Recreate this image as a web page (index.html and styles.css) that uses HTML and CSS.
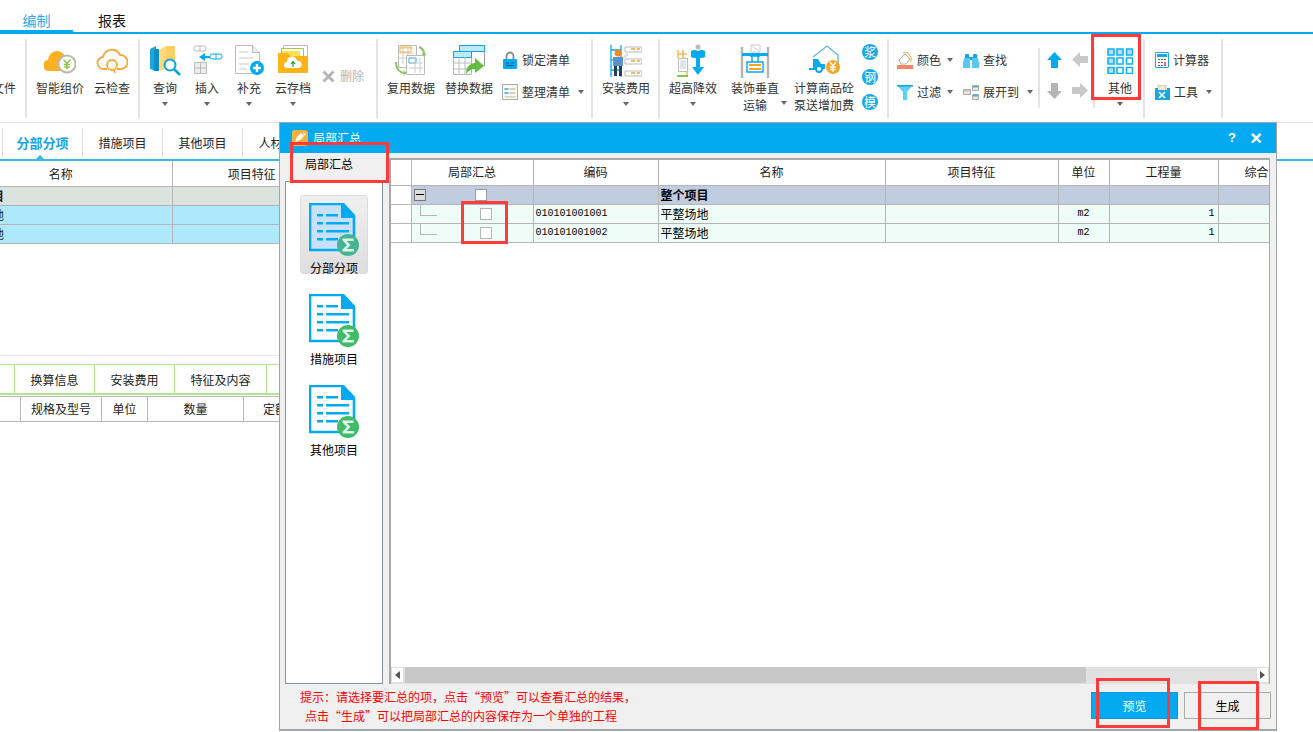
FILE: index.html
```html
<!DOCTYPE html>
<html lang="zh-CN">
<head>
<meta charset="utf-8">
<title>局部汇总</title>
<link rel="stylesheet" href="styles.css">
</head>
<body>
<svg class="defs" width="0" height="0">
  <symbol id="doc" viewBox="0 0 50 53">
    <path d="M1 1H33L45 13V47H1Z" fill="var(--docfill,#fff)" stroke="#03a9f1" stroke-width="2.6"/>
    <path d="M32 0H35L46 12V15H32Z" fill="#03a9f1"/>
    <path d="M8 11h6v2.6H8zM17 11h12v2.6H17zM8 19h6v2.6H8zM17 19h23v2.6H17zM8 27h6v2.6H8zM17 27h23v2.6H17zM8 35h6v2.6H8zM17 35h12v2.6H17z" fill="#03a9f1"/>
    <circle cx="39" cy="42" r="11" fill="var(--sigfill,#40bb6a)"/>
    <path d="M33.500 35.500h11v2.500h-7l4 4-4 4h7.500v2.500h-11.500v-2l4.500-4.500-4.500-4.500z" fill="#dff5e8"/>
  </symbol>
</svg>

<header class="menu">
  <a class="menu-tab active">编制</a>
  <a class="menu-tab">报表</a>
</header>

<section class="ribbon">
  <div class="group g-file"><div class="tool"><div class="ico"></div><span class="lbl file-lbl">文件</span></div></div>

  <div class="group g-cloud">
    <div class="tool w52">
      <svg class="ico" width="32" height="32" viewBox="0 0 32 32"><path d="M5 27a5.500 5.500 0 0 1-1-11 9 9 0 0 1 17-4l5 15Z" fill="#fdb022"/><circle cx="23" cy="20" r="8.500" fill="#fff" stroke="#b9b9a8" stroke-width="1.800"/><path d="M19.500 15.500l3.500 4 3.500-4M23 19.500v6M19.800 20.500h6.400M19.800 23h6.400" fill="none" stroke="#8cc63f" stroke-width="1.400"/></svg>
      <span class="lbl">智能组价</span>
    </div>
    <div class="tool w52">
      <svg class="ico" width="32" height="32" viewBox="0 0 32 32"><path d="M8 25a6 6 0 0 1-1-12A9 9 0 0 1 24 11a7 7 0 0 1 1 14h-4M11 25H8" fill="none" stroke="#f9a93a" stroke-width="1.800"/><circle cx="16" cy="21" r="5" fill="none" stroke="#f9a93a" stroke-width="1.800"/><path d="M18 26l1 3" stroke="#f9a93a" stroke-width="1.800"/></svg>
      <span class="lbl">云检查</span>
    </div>
  </div>

  <div class="group g-query">
    <div class="tool w42">
      <svg class="ico" width="32" height="32" viewBox="0 0 32 32"><path d="M1 5l6-3v25l-6-2Z" fill="#1ba6dc"/><path d="M5 5h5v22H5z" fill="#0d8fc4"/><path d="M10 6l7-4v23l-7 2Z" fill="#ffd97a"/><path d="M17 2l9 0v22h-9z" fill="#ffcf66"/><circle cx="21" cy="21" r="5.500" fill="#fff" stroke="#0aa4e0" stroke-width="2"/><path d="M25 25l6 6" stroke="#0aa4e0" stroke-width="2.600"/></svg>
      <span class="lbl">查询</span><i class="caret"></i>
    </div>
    <div class="tool w42">
      <svg class="ico" width="32" height="32" viewBox="0 0 32 32"><rect x="3" y="2" width="12" height="5" rx="2" fill="none" stroke="#bbb"/><path d="M9 2v5" stroke="#bbb"/><path d="M8 13l6-4v3h5v2h-5v3Z" fill="#03a9f1"/><rect x="19" y="10" width="12" height="5" rx="2" fill="none" stroke="#03a9f1"/><path d="M25 10v5" stroke="#03a9f1"/><path d="M3.500 18.500h12v11h-12zM3.500 24h12M9.500 18.500v11" fill="#eee" stroke="#bbb"/></svg>
      <span class="lbl">插入</span><i class="caret"></i>
    </div>
    <div class="tool w42">
      <svg class="ico" width="32" height="32" viewBox="0 0 32 32"><path d="M2.500 1.500h17l7 7v21h-24z" fill="#fff" stroke="#bbb"/><path d="M19.500 1.500v7h7" fill="#eee" stroke="#bbb"/><path d="M6 8h9M6 14h14M6 20h10M6 25h8" stroke="#ddd" stroke-width="1.500"/><circle cx="24" cy="24" r="7" fill="#03a9f1"/><path d="M24 20v8M20 24h8" stroke="#fff" stroke-width="2.400"/></svg>
      <span class="lbl">补充</span><i class="caret"></i>
    </div>
    <div class="tool w46">
      <svg class="ico" width="32" height="32" viewBox="0 0 32 32"><path d="M6.500 1.500h24v12h-24z" fill="#fff" stroke="#bbb"/><path d="M4.500 4.500h22v10h-22z" fill="#fff" stroke="#a5c93d"/><path d="M5 7h18v8H5z" fill="#ffe14a"/><path d="M1 9h10l2 3h18v17H1Z" fill="#fdb416"/><path d="M10 24a3 3 0 0 1 0-6 5 5 0 0 1 10-1 3.500 3.500 0 0 1 2 7Z" fill="#fff"/><path d="M16 23v-5M14 20l2-2.500 2 2.500" fill="none" stroke="#1aa531" stroke-width="1.200"/></svg>
      <span class="lbl">云存档</span><i class="caret"></i>
    </div>
    <div class="mini-del">
      <svg width="13" height="13" viewBox="0 0 13 13"><path d="M1.500 1.500l10 10M11.500 1.500l-10 10" stroke="#b5b5b5" stroke-width="3"/></svg>
      <span class="lbl dis">删除</span>
    </div>
  </div>

  <div class="group g-data">
    <div class="tool w58">
      <svg class="ico" width="32" height="32" viewBox="0 0 32 32"><path d="M3.500 1.500h18v22h-18z" fill="#fff" stroke="#bbb"/><path d="M3.500 4h15M3.500 9h15M3.500 14h15M8 4v16M13 4v16" stroke="#ccc"/><path d="M5 3h11v5H5z" fill="none" stroke="#f8b33a"/><path d="M11.500 11.500h18v19h-18z" fill="#fff" stroke="#bbb"/><path d="M14 14h7v5h-7z" fill="none" stroke="#2aa7df"/><path d="M14 19h14M14 24h14M20 14v15M25 14v15" stroke="#ccc"/><path d="M24 2c4 1 6 4 6 8l2-1-3 4-3-4 2 1c0-3-2-5-4-6Z" fill="#8cc663"/><path d="M2 18c0 5 2 9 7 10l-1-2 4 3-4 3 1-2c-6-1-9-6-9-12Z" fill="#8cc663"/></svg>
      <span class="lbl">复用数据</span>
    </div>
    <div class="tool w58">
      <svg class="ico" width="32" height="32" viewBox="0 0 32 32"><path d="M6.500 1.500h25v20h-25z" fill="#fff" stroke="#9a9a9a"/><path d="M6.500 1.500h25v6h-25z" fill="#bde8f8" stroke="#14a5d8"/><path d="M.5 7.500h18v23H.5z" fill="#fff" stroke="#b5b5b5"/><path d="M.5 7.500h18v6H.5z" fill="#bde8f8" stroke="#14a5d8"/><path d="M.5 19h18M.5 25h18M6 13v17M12 13v17" stroke="#bbb"/><path d="M13 30c0-7 4-11 9-11v-5l9 8-9 7v-4c-4 0-7 2-9 5Z" fill="#5fbf3d"/></svg>
      <span class="lbl">替换数据</span>
    </div>
    <div class="col-list">
      <div class="mini">
        <svg width="16" height="18" viewBox="0 0 16 18"><path d="M4.500 8V5a3.500 3.500 0 0 1 7 0v3" fill="none" stroke="#888" stroke-width="1.800"/><rect x="1" y="8" width="14" height="10" rx="1" fill="#03a9f1"/><path d="M4 12h3M9 12h3M4 14.500h8" stroke="#0b5c83"/></svg>
        <span class="lbl">锁定清单</span>
      </div>
      <div class="mini">
        <svg width="16" height="16" viewBox="0 0 16 16"><path d="M.5.500h15v15H.5z" fill="#fbf9f1" stroke="#aaa"/><path d="M2.500 4h4v2h-4zM2.500 8h4v2h-4z" fill="#6fb7dd"/><path d="M7.500 4h6v2h-6zM7.500 8h6v2h-6zM2.500 12h11v1.500h-11z" fill="#d9d3b8"/></svg>
        <span class="lbl">整理清单</span><i class="caret side"></i>
      </div>
    </div>
  </div>

  <div class="group g-install">
    <div class="tool w66">
      <svg class="ico" width="32" height="34" viewBox="0 0 32 34"><path d="M1 1v32M11 1v32M1 6h10M1 16h10M1 26h10" stroke="#03a9f1" stroke-width="1.300" fill="none"/><path d="M15 3h17v5H15zM15 15h17v5H15zM15 27h17v5H15z" fill="#fff" stroke="#bbb"/><path d="M21 5h4M27 5h3M21 17h4M27 17h3M21 29h4M27 29h3" stroke="#f5a623" stroke-width="1.400"/><circle cx="8" cy="9" r="3.500" fill="#f58a1f"/><path d="M3 13h10v9H3z" fill="#5b92c9"/><path d="M4 22h3v10H4zM9 22h3v10H9z" fill="#25404f"/><path d="M13 14l5-4" stroke="#d7d7d7" stroke-width="2"/></svg>
      <span class="lbl">安装费用</span><i class="caret"></i>
    </div>
  </div>

  <div class="group g-height">
    <div class="tool w66">
      <svg class="ico" width="32" height="34" viewBox="0 0 32 34"><path d="M1 6v8M6 6v8M1 10h5M6 10h4M10 14v18" stroke="#f5a623" stroke-width="1.200" fill="none"/><circle cx="21" cy="3" r="2.500" fill="#bbb"/><path d="M14 7q3-2 7 0q4-2 7 0v6q-4 2-7 0q-3 2-7 0Z" fill="#03a9f1"/><path d="M19 13h4v10h4l-6 8-6-8h4Z" fill="#03a9f1"/><path d="M1.500 14.500h9v13h-9z" fill="#fff" stroke="#bbb"/><path d="M3 16h6v9H3z" fill="#dfe6e6"/><path d="M0 32h11" stroke="#8cc63f" stroke-width="2"/></svg>
      <span class="lbl">超高降效</span><i class="caret"></i>
    </div>
    <div class="tool w58 tall">
      <svg class="ico" width="30" height="34" viewBox="0 0 30 34"><path d="M2 3v31M28 3v31" stroke="#b4b4b4" stroke-width="2.400"/><path d="M11 1h9v7h-9zM11 1l9 7" fill="#fff" stroke="#ccc"/><path d="M2 9h26v3H2z" fill="#03a9f1"/><path d="M10 12h10M12 12v6M18 12v6" stroke="#03a9f1" stroke-width="1.500"/><path d="M7 18h16v10H7z" fill="#fff" stroke="#03a9f1" stroke-width="1.400"/><path d="M9 21h12M9 25h12" stroke="#f5a623" stroke-width="2"/></svg>
      <span class="lbl">装饰垂直</span><span class="lbl">运输</span>
    </div>
    <i class="caret loose"></i>
    <div class="tool w72 tall">
      <svg class="ico" width="34" height="32" viewBox="0 0 34 32"><path d="M6 13L20 2l11 9v8" fill="none" stroke="#5ab6de" stroke-width="1.300"/><path d="M6 24V15h5l3 5h4v5H6z" fill="#03a9f1"/><path d="M2 25h8" stroke="#03a9f1" stroke-width="2"/><circle cx="12" cy="25" r="3" fill="#fff" stroke="#03a9f1" stroke-width="1.800"/><circle cx="26" cy="23" r="7" fill="#f5a623"/><path d="M23 18l3 4 3-4M26 22v6M23 23h6M23 25.500h6" fill="none" stroke="#fff" stroke-width="1.300"/></svg>
      <span class="lbl">计算商品砼</span><span class="lbl">泵送增加费</span>
    </div>
    <div class="circles"><b>浆</b><b>钢</b><b>模</b></div>
  </div>

  <div class="group g-filter">
    <div class="mini">
      <svg width="16" height="17" viewBox="0 0 16 17"><path d="M2 8l6-6 5 5-4 5H4z" fill="#fff" stroke="#aaa"/><path d="M7 2V0h3l4 5v5" fill="none" stroke="#f5a623"/><path d="M0 13h16v4H0z" fill="#f58863"/></svg>
      <span class="lbl">颜色</span><i class="caret side near"></i>
    </div>
    <div class="mini">
      <svg width="16" height="15" viewBox="0 0 16 15"><path d="M2 2a1 1 0 0 1 1-1h2a1 1 0 0 1 1 1v3H2zM10 2a1 1 0 0 1 1-1h2a1 1 0 0 1 1 1v3h-4zM6 4h4v3H6z" fill="#10a5dc"/><path d="M1 5h6v10H0v-5zM9 5h6l1 5v5H9z" fill="#58c8f0"/></svg>
      <span class="lbl">查找</span>
    </div>
    <div class="mini">
      <svg width="16" height="15" viewBox="0 0 16 15"><path d="M0 0h16L10 7v8H6V7Z" fill="#5fd0f5"/><path d="M0 0h16v1.500H0z" fill="#10a5dc"/></svg>
      <span class="lbl">过滤</span><i class="caret side near"></i>
    </div>
    <div class="mini">
      <svg width="16" height="15" viewBox="0 0 16 15"><path d="M.5 4.500h7v5h-7zM9.500.5h6v5h-6zM9.500 9.500h6v5h-6z" fill="#f0e6d2" stroke="#aaa"/><path d="M10 1h5v1.500h-5zM10 10h5v1.500h-5z" fill="#35b5e8"/><path d="M1 5h6v1.500H1z" fill="#c8c8c8"/></svg>
      <span class="lbl">展开到</span><i class="caret side"></i>
    </div>
  </div>

  <div class="group g-arrows short">
    <svg width="15" height="16" viewBox="0 0 15 16"><path d="M7.500 0L15 8h-4v8H4V8H0Z" fill="#03a9f1"/></svg>
    <svg width="16" height="15" viewBox="0 0 16 15"><path d="M0 7.500L8 0v4h8v7H8v4Z" fill="#c8c8c8"/></svg>
    <svg width="15" height="16" viewBox="0 0 15 16"><path d="M7.500 16L15 8h-4V0H4v8H0Z" fill="#b4b4b4"/></svg>
    <svg width="16" height="15" viewBox="0 0 16 15"><path d="M16 7.500L8 0v4H0v7h8v4Z" fill="#c8c8c8"/></svg>
  </div>

  <div class="group g-other short-sep">
    <div class="tool w50">
      <svg class="ico" width="26" height="26" viewBox="0 0 26 26"><path d="M10 10h6v6h-6zM19.500 10h6v6h-6zM10 19.500h6v6h-6zM19.500 19.500h6v6h-6z" fill="#fff" stroke="#0fb2f2" stroke-width="1.600"/><path d="M1 1h6v6H1zM10 1h6v6h-6zM19.500 1h6v6h-6zM1 10h6v6H1zM1 19.500h6v6H1z" fill="#b9dcf2" stroke="#0fb2f2" stroke-width="1.600"/></svg>
      <span class="lbl">其他</span><i class="caret"></i>
    </div>
  </div>

  <div class="group g-tools">
    <div class="mini">
      <svg width="14" height="16" viewBox="0 0 14 16"><path d="M1 .5h12a.5.500 0 0 1 .5.500v14a.5.500 0 0 1-.5.500H1a.5.500 0 0 1-.5-.500V1A.5.500 0 0 1 1 .5z" fill="#fff" stroke="#1ba8e0"/><path d="M2 2h10v3H2z" fill="#1ba8e0"/><path d="M3 7h2v1H3zM6 7h2v1H6zM9 7h2v1H9zM3 10h2v1H3zM6 10h2v1H6zM3 13h2v1H3zM6 13h2v1H6z" fill="#666"/><path d="M9 10h2v4H9z" fill="#f06a4f"/></svg>
      <span class="lbl">计算器</span>
    </div>
    <div class="mini">
      <svg width="15" height="15" viewBox="0 0 15 15"><path d="M3 0h8v6H3z" fill="#f5e9c8" stroke="#aaa" stroke-width=".6"/><path d="M0 3h3v2h9V3h3v12H0Z" fill="#1ba8e0"/><path d="M4 7l6 6M10 7l-6 6" stroke="#fff" stroke-width="1.600"/></svg>
      <span class="lbl">工具</span><i class="caret side"></i>
    </div>
  </div>
</section>

<nav class="sheets">
  <a class="sheet on">分部分项</a>
  <a class="sheet">措施项目</a>
  <a class="sheet">其他项目</a>
  <a class="sheet last">人材机汇总</a>
</nav>

<table class="bg-table">
  <colgroup><col class="c1"><col class="c2"></colgroup>
  <tr class="hd"><td class="nm">名称</td><td class="feat">项目特征</td></tr>
  <tr class="r-group"><td><span class="cut bold">整个项目</span></td><td></td></tr>
  <tr class="r-sel"><td><span class="cut">平整场地</span></td><td></td></tr>
  <tr class="r-sel"><td><span class="cut">平整场地</span></td><td></td></tr>
</table>

<div class="lower">
  <div class="lower-tabs">
    <a class="ltab first"></a>
    <a class="ltab w80">换算信息</a>
    <a class="ltab w80">安装费用</a>
    <a class="ltab w92">特征及内容</a>
  </div>
  <div class="lower-head">
    <span class="lh lh0"></span>
    <span class="lh lh1">规格及型号</span>
    <span class="lh lh2">单位</span>
    <span class="lh lh3">数量</span>
    <span class="lh lh4">定额价</span>
  </div>
</div>

<section class="dialog">
  <div class="title">
    <svg width="16" height="16" viewBox="0 0 16 16"><rect width="16" height="16" rx="3" fill="#fbb03b"/><path d="M3 12l2-5 4-4 3 3-4 4Z" fill="#fff"/><path d="M11 2l3 2-2 2Z" fill="#fff"/></svg>
    <span class="title-text">局部汇总</span>
    <span class="title-btn">?</span>
    <span class="title-btn x">×</span>
  </div>
  <div class="body">
    <div class="left">
      <div class="left-tab">局部汇总</div>
      <div class="left-panel">
        <div class="nav sel">
          <svg class="navico" width="50" height="53"><use href="#doc"/></svg>
          <span>分部分项</span>
        </div>
        <div class="nav">
          <svg class="navico" width="50" height="53"><use href="#doc"/></svg>
          <span>措施项目</span>
        </div>
        <div class="nav">
          <svg class="navico" width="50" height="53"><use href="#doc"/></svg>
          <span>其他项目</span>
        </div>
      </div>
    </div>
    <div class="grid-panel">
      <div class="grid-wrap">
        <table class="grid">
          <colgroup><col class="g0"><col class="g1"><col class="g2"><col class="g3"><col class="g4"><col class="g5"><col class="g6"><col class="g7"></colgroup>
          <tr class="ghead"><td></td><td>局部汇总</td><td>编码</td><td>名称</td><td>项目特征</td><td>单位</td><td>工程量</td><td class="clip">综合</td></tr>
          <tr class="gsum"><td class="w"></td><td class="tree-cell"><i class="expander"></i><i class="check top"></i></td><td></td><td class="bold">整个项目</td><td></td><td></td><td></td><td></td></tr>
          <tr class="grow"><td class="w"></td><td class="tree-cell"><i class="tree t1"></i><i class="check"></i></td><td class="num">010101001001</td><td>平整场地</td><td></td><td class="unit">m2</td><td class="qty">1</td><td></td></tr>
          <tr class="grow"><td class="w"></td><td class="tree-cell"><i class="tree t2"></i><i class="check"></i></td><td class="num">010101001002</td><td>平整场地</td><td></td><td class="unit">m2</td><td class="qty">1</td><td></td></tr>
        </table>
      </div>
      <div class="hscroll">
        <span class="sb-btn"><i class="tri-l"></i></span>
        <span class="thumb"></span>
        <span class="sb-btn"><i class="tri-r"></i></span>
      </div>
    </div>
  </div>
  <div class="foot">
    <div class="note">
      <p>提示：请选择要汇总的项，点击“预览”可以查看汇总的结果，</p>
      <p class="l2">点击“生成”可以把局部汇总的内容保存为一个单独的工程</p>
    </div>
    <button class="btn primary">预览</button>
    <button class="btn">生成</button>
  </div>
</section>

<div class="mark m1"></div>
<div class="mark m2"></div>
<div class="mark m3"></div>
<div class="mark m4"></div>
<div class="mark m5"></div>
</body>
</html>
```

FILE: styles.css
```css
* { box-sizing: border-box; }
html, body { margin: 0; height: 732px; overflow: hidden; background: #fff; }
body { font: 12px/16px "Noto Sans CJK SC", "Liberation Sans", sans-serif; color: #222; position: relative; }
.defs { position: absolute; }
a { display: block; }
svg { display: block; flex: none; }
p { margin: 0; }

/* menu */
.menu { display: flex; height: 34px; border-bottom: 2px solid #03a9f1; }
.menu-tab { height: 32px; font-size: 14px; line-height: 40px; text-align: center; width: 73px; color: #111; }
.menu-tab + .menu-tab { width: 78px; }
.menu-tab.active { color: #2fa9e8; border-bottom: 2px solid #03a9f1; height: 32px; box-shadow: 0 2px 0 #03a9f1; }

/* ribbon */
.ribbon { display: flex; height: 89px; border-bottom: 1px solid #e0e0e0; padding-top: 5px; }
.group { height: 79px; border-right: 2px solid #e3e3e3; display: flex; flex: none; padding-top: 5px; }
.g-file { width: 27px; justify-content: flex-end; overflow: hidden; }
.g-cloud { width: 113px; padding-left: 7px; }
.g-query { width: 238px; padding-left: 4px; }
.g-data { width: 215px; padding-left: 4px; }
.g-install { width: 67px; }
.g-height { width: 229px; }
.g-filter { width: 151px; display: grid; grid-template-columns: 66px 1fr; grid-auto-rows: 32px; padding: 13px 0 0 8px; align-content: start; border-right-color: transparent; position: relative; }
.g-arrows { width: 55px; display: grid; grid-template-columns: 25px 25px; grid-auto-rows: 31px; padding: 13px 0 0 7px; align-content: start; border-right-color: transparent; position: relative; }
.g-filter::after, .g-arrows::after { content: ""; position: absolute; right: -2px; top: 9px; height: 60px; width: 2px; background: #e3e3e3; }
.g-other { width: 50px; }
.g-tools { width: 78px; display: flex; flex-direction: column; padding: 13px 0 0 10px; gap: 16px; }

.tool { display: flex; flex-direction: column; align-items: center; flex: none; }
.ico { height: 32px; flex: none; }
.tool .lbl { margin-top: 2px; white-space: nowrap; }
.tool .lbl + .lbl { margin-top: 1px; }
.tool svg.ico { height: auto; margin-bottom: 2px; }
.tool svg[height="34"].ico { margin-bottom: 0; }
.tool svg[height="26"].ico { margin: 4px 0 4px; }
.file-lbl { display: block; width: 18px; overflow: hidden; direction: rtl; margin-right: 9px; }
.g-file .tool { align-items: flex-end; width: 26px; }
.g-file .ico { height: 34px; }
.w42 { width: 42px; } .w46 { width: 46px; } .w50 { width: 50px; } .w52 { width: 52px; }
.w58 { width: 58px; } .w66 { width: 66px; } .w72 { width: 72px; }
.g-height .w72 { margin-left: 1px; }
.lbl { color: #333; line-height: 16px; }
.dis { color: #b5b5b5; }
.caret { display: block; width: 0; height: 0; border: 3.500px solid transparent; border-top: 4px solid #666; border-bottom: 0; margin-top: 6px; }
.caret.side { margin: 0 0 0 4px; }
.caret.near { margin-left: 2px; }
.caret.loose { margin: 57px 0 0 -3px; }
.mini { display: flex; align-items: center; gap: 4px; height: 16px; white-space: nowrap; }
.mini-del { display: flex; align-items: center; gap: 5px; height: 16px; margin: 24px 0 0 6px; }
.col-list { display: flex; flex-direction: column; gap: 16px; padding-top: 8px; margin-left: 4px; }
.circles { display: flex; flex-direction: column; gap: 9px; margin-left: 2px; }
.circles b { display: block; width: 16px; height: 16px; border-radius: 50%; background: #1ba8e8; color: #fff; font-weight: 400; font-size: 12px; line-height: 16px; text-align: center; }

/* sheet tabs */
.sheets { display: flex; height: 38px; padding: 5px 0 0 2px; border-bottom: 2px solid #3fb7e3; position: relative; }
.sheet { width: 80px; height: 29px; border-left: 1px solid #e0e0e0; text-align: center; line-height: 30px; color: #222; }
.sheet.last { width: 92px; }
.sheet.on { color: #14a5e6; font-weight: 700; font-size: 13px; position: relative; }
.sheet.on::after { content: ""; position: absolute; left: 33px; bottom: -2px; border: 4px solid transparent; border-bottom-color: #3fb7e3; border-top: 0; }

/* background table */
.bg-table { border-collapse: collapse; table-layout: fixed; width: 332px; }
.c1 { width: 172px; }
.bg-table td { border: 1px solid #b5b5b5; border-width: 0 1px 1px 0; padding: 0; height: 19px; line-height: 16px; }
.bg-table .hd td { height: 25px; text-align: center; background: #fff; padding-top: 2px; }
.bg-table .hd .nm { padding-right: 50px; }
.r-group td { background: #dbe3de; }
.r-sel td { background: #ade8fb; }
.cut { display: block; width: 4px; overflow: hidden; white-space: nowrap; direction: rtl; }
.bold { font-weight: 700; }

/* lower */
.lower { margin-top: 111px; border-top: 1px solid #e6e6e6; padding-top: 8px; width: 300px; }
.lower-tabs { display: flex; height: 31px; border-top: 1px solid #b0e591; border-bottom: 2px solid #b0e591; }
.ltab { border-right: 1px solid #b0e591; text-align: center; line-height: 29px; height: 28px; flex: none; }
.first { width: 15px; }
.w80 { width: 80px; } .w92 { width: 92px; }
.lower-head { display: flex; height: 26px; border-top: 1px solid #b5b5b5; border-bottom: 1px solid #b5b5b5; margin-top: 1px; }
.lh { border-right: 1px solid #b5b5b5; text-align: center; line-height: 24px; flex: none; }
.lh0 { width: 21px; } .lh1 { width: 81px; } .lh2 { width: 46px; } .lh3 { width: 96px; }
.lh4 { width: 56px; border: 0; white-space: nowrap; text-align: left; padding-left: 19px; }

/* dialog */
.dialog { position: absolute; left: 279px; top: 122px; width: 998px; height: 609px; background: #f0f0f0; border: 1px solid #a0a6ab; border-bottom-width: 2px; color: #000; display: flex; flex-direction: column; }
.title { height: 30px; background: #03a9f1; color: #fff; display: flex; align-items: center; padding: 0 8px 0 12px; flex: none; }
.title-text { margin: 0 auto 0 5px; }
.title-btn { font: 700 13px/16px "Liberation Sans", sans-serif; width: 24px; text-align: center; }
.title-btn.x { font-size: 20px; }
.body { display: flex; height: 531px; flex: none; }
.left { width: 109px; padding-left: 5px; flex: none; display: flex; flex-direction: column; }
.left-tab { height: 28px; width: 98px; padding-left: 20px; line-height: 22px; }
.left-panel { width: 98px; height: 503px; background: #fff; border: 1px solid #8a9299; display: flex; flex-direction: column; align-items: center; padding-top: 13px; }
.nav { width: 68px; height: 79px; display: flex; flex-direction: column; align-items: center; margin-bottom: 12px; padding-top: 7px; --docfill: #fff; --sigfill: #40bb6a; }
.nav.sel { border: 1px solid #dcdcdc; border-radius: 3px; background: linear-gradient(#efefef, #dedede); margin-bottom: 13px; --docfill: #c7e0fb; --sigfill: #45b492; }
.navico { width: 50px; height: 53px; margin-bottom: 2px; }
.nav span { line-height: 14px; margin-top: 3px; }
.grid-panel { width: 881px; height: 526px; margin-top: 5px; background: #fff; border: 1px solid #a8a8a8; border-width: 2px 1px 0 2px; display: flex; flex-direction: column; }
.grid-wrap { flex: 1; overflow: hidden; }
.grid { border-collapse: collapse; table-layout: fixed; width: 879px; }
.g0 { width: 20px; } .g1 { width: 122px; } .g2 { width: 125px; } .g3 { width: 227px; } .g4 { width: 173px; } .g5 { width: 51px; } .g6 { width: 109px; } .g7 { width: 52px; }
.grid td { border: 1px solid #b5b5b5; border-width: 0 1px 1px 0; padding: 0 2px; height: 19px; line-height: 16px; white-space: nowrap; overflow: hidden; }
.ghead td { height: 25px; text-align: center; background: #fff; color: #222; }
.grid .ghead .clip { text-align: left; padding-left: 26px; border-right: 0; }
.gsum td { background: #c0cde0; }
.grow td { background: #eefdf8; }
.grid td.w { background: #fff; }
.num, .unit, .qty { font: 10px/16px "Liberation Mono", monospace; }
.grid .unit { text-align: center; }
.grid .qty { text-align: right; padding-right: 3px; }
.tree-cell { position: relative; }
.expander { position: absolute; left: 2px; top: 3px; width: 12px; height: 12px; background: #dcdcdc; border: 1px solid #777; }
.expander::after { content: ""; position: absolute; left: 1px; top: 4px; width: 8px; height: 1px; background: #000; }
.check { display: block; width: 12px; height: 12px; background: #fff; border: 1px solid #b5b5b5; margin: 0 0 0 66px; }
.check.top { margin-left: 61px; border-color: #999; }
.tree { position: absolute; left: 8px; bottom: 7px; width: 17px; border-left: 1px solid #b5b5b5; border-bottom: 1px solid #b5b5b5; }
.t1 { height: 12px; }
.t2 { height: 30px; }
.hscroll { height: 17px; background: #e1e1e1; display: flex; align-items: stretch; padding: 0 0 1px; flex: none; }
.sb-btn { width: 13px; background: #fff; border: 1px solid #ddd; display: flex; align-items: center; justify-content: center; flex: none; }
.thumb { width: 681px; background: #c8c8c8; margin: 0 auto 0 1px; border-radius: 1px; }
.tri-l, .tri-r { display: block; width: 0; height: 0; border: 4px solid transparent; }
.tri-l { border-right: 5px solid #555; border-left: 0; }
.tri-r { border-left: 5px solid #555; border-right: 0; }
.foot { flex: 1; display: flex; align-items: flex-start; }
.note { color: #f00; padding: 3px 0 0 20px; width: 811px; line-height: 19px; }
.note .l2 { padding-left: 5px; }
.btn { font: 12px/16px "Noto Sans CJK SC", sans-serif; width: 87px; height: 27px; margin-top: 8px; background: #f0f0f0; border: 1px solid #aaa; color: #000; padding: 0; }
.btn.primary { background: #03a9f1; border-color: #0d98d5; color: #fff; margin-right: 6px; }

/* red highlight boxes */
.mark { position: absolute; border: 3px solid #ff3a3a; pointer-events: none; }
.m1 { left: 290px; top: 142px; width: 99px; height: 41px; }
.m2 { left: 1091px; top: 34px; width: 50px; height: 66px; }
.m3 { left: 461px; top: 201px; width: 47px; height: 43px; }
.m4 { left: 1096px; top: 678px; width: 74px; height: 50px; }
.m5 { left: 1198px; top: 681px; width: 61px; height: 49px; }
```
